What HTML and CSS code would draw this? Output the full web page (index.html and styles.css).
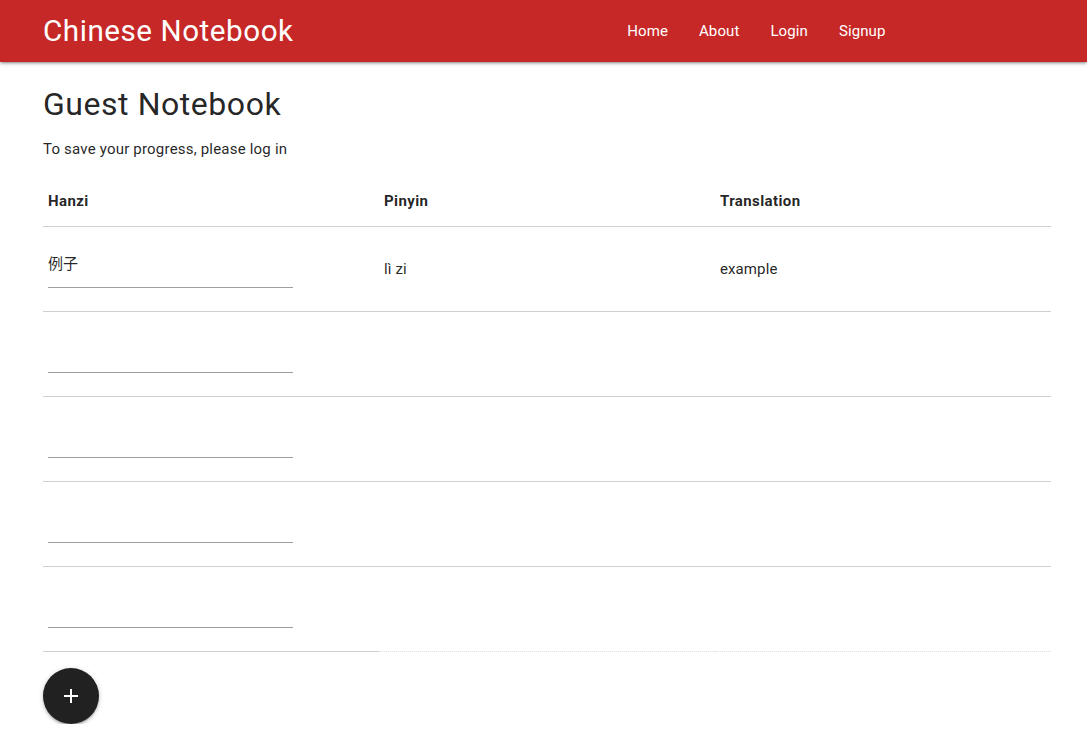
FILE: index.html
```html
<!DOCTYPE html>
<html lang="en">
<head>
<meta charset="utf-8">
<title>Chinese Notebook</title>
<link rel="stylesheet" href="styles.css">
</head>
<body>
<nav class="navbar">
  <a class="brand" href="#">Chinese Notebook</a>
  <ul class="nav-links">
    <li><a href="#">Home</a></li>
    <li><a href="#">About</a></li>
    <li><a href="#">Login</a></li>
    <li><a href="#">Signup</a></li>
  </ul>
</nav>
<main class="container">
  <h1 class="title">Guest Notebook</h1>
  <p class="note">To save your progress, please log in</p>
  <table class="words">
    <thead>
      <tr><th>Hanzi</th><th>Pinyin</th><th>Translation</th></tr>
    </thead>
    <tbody>
      <tr><td><input class="hanzi" type="text" value="例子"></td><td>lì zi</td><td>example</td></tr>
      <tr><td><input class="hanzi" type="text" value=""></td><td></td><td></td></tr>
      <tr><td><input class="hanzi" type="text" value=""></td><td></td><td></td></tr>
      <tr><td><input class="hanzi" type="text" value=""></td><td></td><td></td></tr>
      <tr class="last"><td><input class="hanzi" type="text" value=""></td><td></td><td></td></tr>
    </tbody>
  </table>
  <button class="fab" type="button" aria-label="Add">
    <svg width="16" height="16" viewBox="0 0 16 16"><path d="M8 1v14M1 8h14" stroke="#fff" stroke-width="2" fill="none"/></svg>
  </button>
</main>
</body>
</html>
```
FILE: styles.css
```css
* { box-sizing: border-box; }
html, body { margin: 0; padding: 0; }
body {
  font-family: Roboto, "Liberation Sans", "Noto Sans CJK SC", sans-serif;
  color: rgba(0,0,0,0.87);
  background: #fff;
  font-size: 15px;
  line-height: 1.5;
}
.navbar {
  height: 62px;
  background: #c62828;
  display: flex;
  align-items: center;
  padding: 0 0 0 43px;
  box-shadow: 0 2px 2px 0 rgba(0,0,0,0.14), 0 3px 1px -2px rgba(0,0,0,0.12), 0 1px 5px 0 rgba(0,0,0,0.2);
}
.brand {
  color: #fff;
  text-decoration: none;
  font-size: 29.6px;
  letter-spacing: 0.55px;
  line-height: 62px;
}
.nav-links {
  list-style: none;
  margin: 0 0 0 auto;
  padding: 0;
  display: flex;
  margin-right: 186px;
}
.nav-links a {
  display: block;
  color: #fff;
  text-decoration: none;
  font-size: 15px;
  letter-spacing: 0.1px;
  padding: 0 15.5px;
  line-height: 62px;
}
.container {
  padding: 0 36px 0 43px;
}
.title {
  font-weight: 400;
  font-size: 32px;
  letter-spacing: 0.55px;
  line-height: 35px;
  margin: 25px 0 16px;
}
.note {
  margin: 0 0 13px;
  font-size: 15px;
  letter-spacing: 0.2px;
  line-height: 22.5px;
}
.words {
  width: 100%;
  border-collapse: collapse;
  table-layout: fixed;
}
.words th, .words td {
  text-align: left;
  padding: 15px 5px;
  vertical-align: middle;
  font-size: 15px;
  line-height: 22.5px;
}
.words th { font-weight: 700; letter-spacing: 0.4px; padding-top: 16px; padding-bottom: 14px; }
.words td { letter-spacing: 0.1px; }
.words tr { border-bottom: 1px solid #d0d0d0; }
.words tr.last { border-bottom: none; }
.words tr.last td { border-bottom: 1px dotted #e0e0e0; }
.words tr.last td:first-child { border-bottom: 1px solid #d0d0d0; }
.hanzi {
  display: block;
  width: 245px;
  height: 46px;
  margin: 0 0 8px;
  padding: 0 0 4px;
  border: none;
  border-bottom: 1px solid #9e9e9e;
  outline: none;
  background: transparent;
  font-family: "Noto Sans CJK SC", Roboto, sans-serif;
  font-size: 15px;
  color: rgba(0,0,0,0.87);
}
.fab {
  margin-top: 16px;
  width: 56px;
  height: 56px;
  border-radius: 50%;
  border: none;
  background: #212121;
  display: flex;
  align-items: center;
  justify-content: center;
  padding: 0;
  box-shadow: 0 2px 2px 0 rgba(0,0,0,0.14), 0 3px 1px -2px rgba(0,0,0,0.12), 0 1px 5px 0 rgba(0,0,0,0.2);
}
```
